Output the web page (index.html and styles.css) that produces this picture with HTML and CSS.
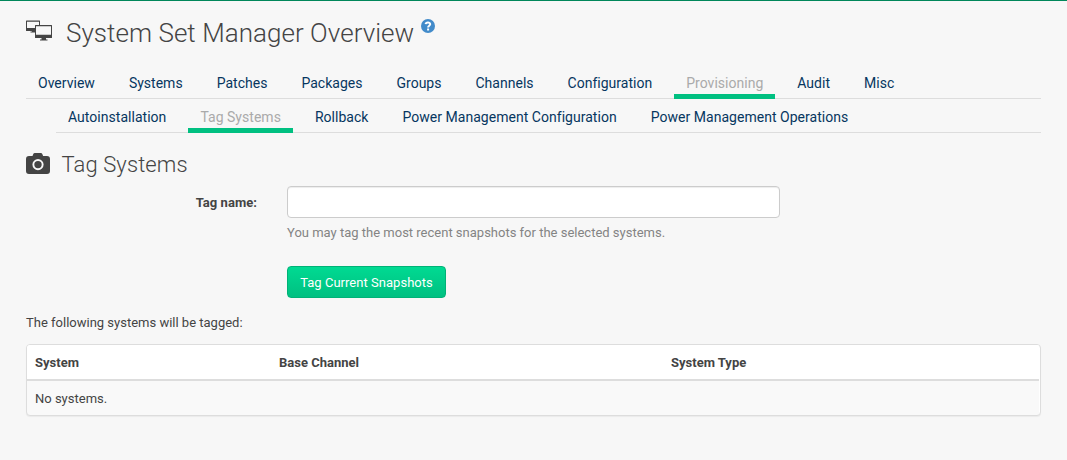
FILE: index.html
```html
<!DOCTYPE html>
<html lang="en">
<head>
<meta charset="utf-8">
<title>System Set Manager Overview</title>
<link rel="stylesheet" href="styles.css">
</head>
<body>
<main class="page">
  <h1 class="title">
    <svg class="title-icon" width="26" height="21" viewBox="0 0 26 21"><path fill="#444" fill-rule="evenodd" d="M.5.500h13q.5 0 .5.500v4h-1V1.700H1V8h8v4.500H4.500v-1H6V11H.500Q0 11 0 10.500V1Q0 .5.500.500zM9.500 5h16q.5 0 .5.500v12q0 .5-.5.500H20v1.500h1.500v1H14v-1h1.500V18h-6q-.5 0-.5-.5v-12q0-.5.500-.5zM10 6.200v8.500h15V6.200z"/></svg>
    <span>System Set Manager Overview</span>
    <svg class="help" width="14" height="14" viewBox="0 0 14 14"><circle cx="7" cy="7" r="7" fill="#428bca"/><path d="M4.600 5.200C5 2.700 9.300 2.900 9.200 5.300 9.100 6.800 7.100 6.700 7.100 8.500" fill="none" stroke="#fff" stroke-width="2"/><path fill="#fff" d="M6.100 9.500h2v2h-2z"/></svg>
  </h1>
  <nav class="tabs">
    <a>Overview</a><a>Systems</a><a>Patches</a><a>Packages</a><a>Groups</a><a>Channels</a><a>Configuration</a><a class="active">Provisioning</a><a>Audit</a><a>Misc</a>
  </nav>
  <nav class="tabs subtabs">
    <a>Autoinstallation</a><a class="active">Tag Systems</a><a>Rollback</a><a>Power Management Configuration</a><a>Power Management Operations</a>
  </nav>
  <h2 class="subtitle">
    <svg width="24" height="21" viewBox="0 0 24 21"><path fill="#444" fill-rule="evenodd" d="M3 3h3.500l.8-2q.4-1 1.500-1h6q1.100 0 1.500 1l.8 2H21q3 0 3 3v12q0 3-3 3H3q-3 0-3-3V6q0-3 3-3zM12 6a5.600 5.600 0 1 0 0 11.200A5.600 5.600 0 0 0 12 6zm0 1.900a3.700 3.700 0 1 1 0 7.400 3.700 3.700 0 0 1 0-7.400z"/></svg>
    <span>Tag Systems</span>
  </h2>
  <form class="form">
    <label class="label" for="tag">Tag name:</label>
    <div class="field">
      <input class="input" id="tag" type="text">
      <p class="hint">You may tag the most recent snapshots for the selected systems.</p>
      <button class="button" type="button">Tag Current Snapshots</button>
    </div>
  </form>
  <p class="note">The following systems will be tagged:</p>
  <div class="panel">
    <div class="row head"><span>System</span><span>Base Channel</span><span>System Type</span></div>
    <div class="row"><span>No systems.</span></div>
  </div>
</main>
</body>
</html>
```
FILE: styles.css
```css
* { box-sizing: border-box; }
body { margin: 0; height: 460px; border-top: 1px solid #00875a; background: #f7f7f7; color: #444; font: 13px/20px Roboto, sans-serif; }
.page { padding: 0 26px; }
h1, h2, p { margin: 0; font-weight: 300; }
.title { display: flex; height: 67px; padding-top: 15px; font-size: 26px; line-height: 34px; letter-spacing: .04px; }
.title-icon { margin: 4px 14px 0 0; }
.help { margin: 3px 0 0 7px; }
.tabs { display: flex; height: 31px; border-bottom: 1px solid #ddd; font-size: 14px; line-height: 20px; letter-spacing: .015px; }
.tabs a { height: 31px; margin-right: 10px; padding: 5px 12px 0; color: #063660; }
.tabs .active { color: #aaa; border-bottom: 5px solid #00c081; }
.subtabs { height: 34px; margin-left: 30px; letter-spacing: .03px; }
.subtabs a { height: 34px; padding-top: 8px; }
.subtitle { display: flex; height: 53px; padding-top: 17px; font-size: 22px; line-height: 30px; letter-spacing: .1px; }
.subtitle svg { margin: 3px 11.500px 0 0; }
.form { display: flex; height: 127px; }
.label { width: 231px; margin-right: 30px; padding-top: 7px; text-align: right; font-weight: 700; letter-spacing: .05px; }
.input { display: block; width: 493px; height: 32px; border: 1px solid #ccc; border-radius: 4px; background: #fff; box-shadow: inset 0 1px 1px rgba(0,0,0,.075); }
.hint { margin-top: 5px; color: #848484; font-weight: 400; }
.button { display: block; width: 159px; height: 32px; margin-top: 23px; padding: 2px 0 0; border: 1px solid #00b277; border-radius: 4px; background: linear-gradient(#00da92, #00c081); color: #fff; font: 13px/20px Roboto, sans-serif; letter-spacing: .03px; }
.note { font-weight: 400; }
.panel { height: 72px; margin-top: 11px; padding-right: 1px; border: 1px solid #ddd; border-radius: 4px; background: #f9f9f9 linear-gradient(#fff, #fff) right / 1px 100% no-repeat; box-shadow: 0 1px 1px rgba(0,0,0,.05); overflow: hidden; }
.row { display: grid; grid-template-columns: 244px 392px 1fr; padding: 8px; }
.head { height: 36px; border-bottom: 2px solid #ddd; background: #fff; font-weight: 700; }
```
